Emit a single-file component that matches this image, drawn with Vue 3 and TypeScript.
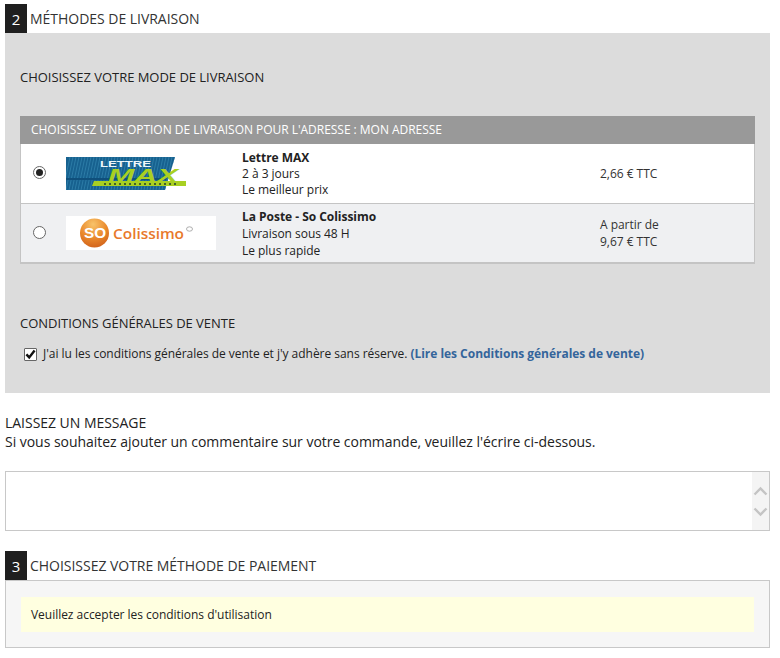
<script setup lang="ts">
const stripes: number[] = Array.from({ length: 38 }, (_, i) => i * 3)
</script>

<template>
  <div class="page">
    <h2 class="step"><span class="num">2</span><span>MÉTHODES DE LIVRAISON</span></h2>
    <section class="panel">
      <h3 class="choose">CHOISISSEZ VOTRE MODE DE LIVRAISON</h3>
      <div class="table">
        <div class="thead">CHOISISSEZ UNE OPTION DE LIVRAISON POUR L'ADRESSE : MON ADRESSE</div>
        <div class="row">
          <span class="radio checked"></span>
          <div class="logo">
            <svg width="120" height="34" viewBox="0 0 120 34">
              <defs>
                <clipPath id="lm"><polygon points="0,0 109,0 99,33 0,33" /></clipPath>
              </defs>
              <polygon points="0,0 109,0 99,33 0,33" fill="#17618f" />
              <g stroke="#2f7fa9" stroke-width="0.9" clip-path="url(#lm)">
                <line v-for="x in stripes" :key="x" :x1="x + 4" y1="0" :x2="x - 3" y2="33" />
              </g>
              <rect y="21" width="100" height="2" fill="#0f4f7b" clip-path="url(#lm)" />
              <text x="34" y="9.5" class="lettre" textLength="51" lengthAdjust="spacingAndGlyphs">LETTRE</text>
              <text x="42" y="25" class="max" textLength="70" lengthAdjust="spacingAndGlyphs">MAX</text>
              <polygon points="28,24 120,24 120,29 26,29" fill="#a8d022" />
              <line x1="38" y1="27" x2="112" y2="27" stroke="#1e3c30" stroke-width="1.3" stroke-dasharray="2 3" />
            </svg>
          </div>
          <div class="info">
            <strong>Lettre MAX</strong>
            <span>2 à 3 jours</span>
            <span>Le meilleur prix</span>
          </div>
          <div class="price">2,66 € TTC</div>
        </div>
        <div class="row alt">
          <span class="radio"></span>
          <div class="logo white">
            <svg width="150" height="34" viewBox="0 0 150 34">
              <defs>
                <radialGradient id="so" cx="0.45" cy="0.2" r="0.85">
                  <stop offset="0" stop-color="#f8c36a" />
                  <stop offset="0.55" stop-color="#ea8a2c" />
                  <stop offset="1" stop-color="#cf5f1a" />
                </radialGradient>
              </defs>
              <rect width="150" height="34" fill="#fff" />
              <circle cx="28.5" cy="17" r="14.5" fill="url(#so)" />
              <text x="18" y="22" class="so" textLength="22" lengthAdjust="spacingAndGlyphs">SO</text>
              <text x="47" y="22.5" class="colissimo" textLength="71" lengthAdjust="spacingAndGlyphs">Colissimo</text>
              <ellipse cx="123.5" cy="13" rx="3" ry="2.2" fill="none" stroke="#999" stroke-width="0.8" />
            </svg>
          </div>
          <div class="info">
            <strong>La Poste - So Colissimo</strong>
            <span>Livraison sous 48 H</span>
            <span>Le plus rapide</span>
          </div>
          <div class="price">A partir de<br />9,67 € TTC</div>
        </div>
      </div>
      <h3 class="cgv">CONDITIONS GÉNÉRALES DE VENTE</h3>
      <label class="accept">
        <span class="check">
          <svg width="13" height="13" viewBox="0 0 13 13">
            <path d="M2.4 6.4 L5.2 9.4 L10.6 2.4" fill="none" stroke="#111" stroke-width="2.4" />
          </svg>
        </span>
        <span>J'ai lu les conditions générales de vente et j'y adhère sans réserve. <a class="link">(Lire les Conditions générales de vente)</a></span>
      </label>
    </section>

    <div class="message">
      <h3>LAISSEZ UN MESSAGE</h3>
      <p>Si vous souhaitez ajouter un commentaire sur votre commande, veuillez l'écrire ci-dessous.</p>
    </div>
    <div class="textarea">
      <div class="scroll">
        <svg width="17" height="12" viewBox="0 0 17 12"><path d="M2.5 9.5 L8.5 3.5 L14.5 9.5" fill="none" stroke="#c4c4c4" stroke-width="2.4" /></svg>
        <svg width="17" height="12" viewBox="0 0 17 12"><path d="M2.5 2.5 L8.5 8.5 L14.5 2.5" fill="none" stroke="#c4c4c4" stroke-width="2.4" /></svg>
      </div>
    </div>

    <h2 class="step second"><span class="num">3</span><span>CHOISISSEZ VOTRE MÉTHODE DE PAIEMENT</span></h2>
    <section class="pay">
      <div class="notice">Veuillez accepter les conditions d'utilisation</div>
    </section>
  </div>
</template>

<style scoped>
.page {
  width: 780px;
  height: 658px;
  padding: 4px 10px 0 5px;
  box-sizing: border-box;
  font-family: "Open Sans", sans-serif;
  font-size: 12px;
  letter-spacing: -0.03px;
  color: #222;
  background: #fff;
  overflow: hidden;
}
h2, h3, p { margin: 0; font-weight: 400; }
.step {
  display: flex;
  align-items: center;
  gap: 3px;
  height: 29px;
  font-size: 14px;
  color: #333;
}
.num {
  width: 22px;
  height: 29px;
  background: #1f1f1f;
  color: #fff;
  font-size: 15px;
  display: flex;
  align-items: center;
  justify-content: center;
}
.panel {
  height: 360px;
  background: #dcdcdc;
  padding: 35px 15px 0;
  box-sizing: border-box;
}
.choose { font-size: 13px; line-height: 18px; color: #222; }
.table { margin-top: 30px; }
.thead {
  height: 28px;
  background: #999;
  color: #fff;
  font-size: 12px;
  line-height: 28px;
  padding-left: 11px;
}
.row {
  display: flex;
  align-items: center;
  height: 60px;
  background: #fff;
  border-left: 1px solid #c4c4c4;
  border-right: 1px solid #c4c4c4;
  border-bottom: 1px solid #c4c4c4;
  box-sizing: border-box;
}
.row.alt { background: #eff0f2; border-bottom-width: 2px; }
.row.alt .info { line-height: 17px; }
.radio {
  width: 13px;
  height: 13px;
  margin: 0 0 2px 12px;
  border: 1px solid #666;
  border-radius: 50%;
  background: #fff;
  box-sizing: border-box;
  position: relative;
  flex: none;
}
.radio.checked::after {
  content: "";
  position: absolute;
  inset: 2px;
  border-radius: 50%;
  background: #222;
}
.logo { width: 150px; height: 34px; margin-left: 20px; flex: none; }
.logo svg { display: block; }
.lettre { font: 700 9px "Liberation Sans", sans-serif; fill: #eef6fa; }
.max { font: italic 700 18px "Liberation Sans", sans-serif; fill: #a8d022; }
.so { font: 700 15px "Liberation Sans", sans-serif; fill: #fff; }
.colissimo { font: 600 15px "Open Sans", sans-serif; fill: #e8792c; }
.info {
  display: flex;
  flex-direction: column;
  margin-left: 26px;
  width: 358px;
  font-size: 12px;
  line-height: 16px;
}
.info strong { font-weight: 700; }
.price { font-size: 12px; line-height: 17px; color: #333; }
.cgv { font-size: 13px; line-height: 18px; margin-top: 50px; }
.accept {
  display: flex;
  align-items: center;
  margin-top: 13px;
  margin-left: 4px;
  gap: 6px;
  font-size: 12px;
  line-height: 18px;
}
.check {
  width: 13px;
  height: 13px;
  border: 1px solid #666;
  border-radius: 1px;
  background: #fff;
  box-sizing: border-box;
  display: flex;
  align-items: center;
  justify-content: center;
  flex: none;
}
.check svg { flex: none; }
.link { color: #34659b; font-weight: 700; }
.message { margin-top: 20px; font-size: 14px; line-height: 19px; color: #222; }
.message h3 { font-size: 14px; line-height: 19px; }
.message p { font-size: 14px; }
.textarea {
  margin-top: 20px;
  height: 60px;
  border: 1px solid #c8c8c8;
  box-sizing: border-box;
  background: #fff;
  display: flex;
  justify-content: flex-end;
}
.scroll {
  width: 17px;
  background: #f4f4f4;
  display: flex;
  flex-direction: column;
  align-items: center;
  justify-content: center;
  gap: 9px;
}
.second { margin-top: 20px; }
.pay {
  height: 68px;
  border: 1px solid #c8c8c8;
  background: #f6f6f6;
  padding: 16px 15px 0;
  box-sizing: border-box;
}
.notice {
  height: 35px;
  background: #ffffe0;
  font-size: 12px;
  line-height: 35px;
  padding-left: 10px;
}
</style>
